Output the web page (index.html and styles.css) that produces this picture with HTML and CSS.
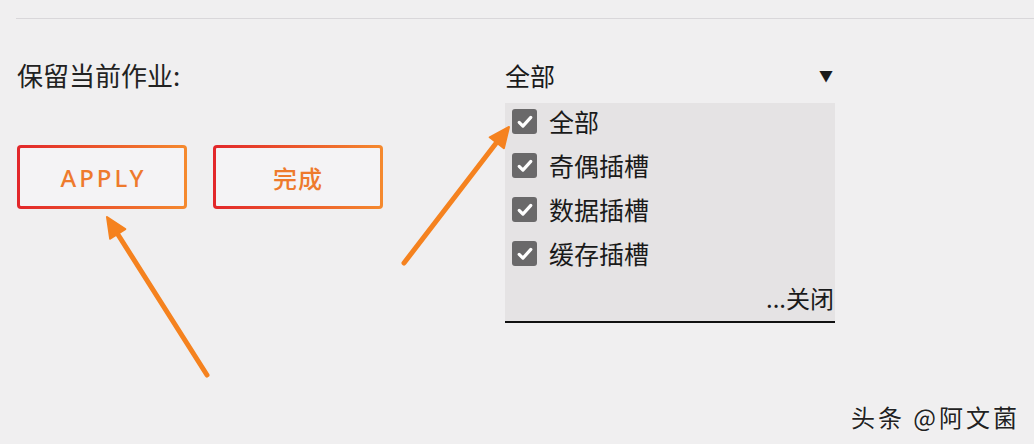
FILE: index.html
```html
<!DOCTYPE html>
<html lang="zh-CN">
<head>
    <meta charset="UTF-8">
    <title>保留当前作业</title>
    <link rel="stylesheet" href="styles.css">
</head>
<body>
    <div class="rule"></div>

    <div class="main">
        <div class="left">
            <div class="label">保留当前作业:</div>
            <div class="buttons">
                <button class="btn apply">APPLY</button>
                <button class="btn">完成</button>
            </div>
        </div>

        <div class="right">
            <div class="select">
                <span>全部</span>
                <span class="caret">&#9660;</span>
            </div>
            <div class="panel">
                <div class="items">
                    <div class="item"><span class="box"><svg viewBox="0 0 24 24"><path d="M5 12.5l4.5 4.5L19 6.5"/></svg></span>全部</div>
                    <div class="item"><span class="box"><svg viewBox="0 0 24 24"><path d="M5 12.5l4.5 4.5L19 6.5"/></svg></span>奇偶插槽</div>
                    <div class="item"><span class="box"><svg viewBox="0 0 24 24"><path d="M5 12.5l4.5 4.5L19 6.5"/></svg></span>数据插槽</div>
                    <div class="item"><span class="box"><svg viewBox="0 0 24 24"><path d="M5 12.5l4.5 4.5L19 6.5"/></svg></span>缓存插槽</div>
                </div>
                <div class="close">...关闭</div>
            </div>
        </div>
    </div>

    <!-- setas de anotação -->
    <svg class="arrows" width="1034" height="444" viewBox="0 0 1034 444">
        <line x1="207" y1="375" x2="117" y2="233"/>
        <polygon points="107,217 125.3,229.1 110.1,238.7"/>
        <line x1="404" y1="263" x2="497" y2="142"/>
        <polygon points="509,127 503.9,148.3 489.7,137.3"/>
    </svg>

    <div class="mark">头条 @阿文菌</div>
</body>
</html>
```

FILE: styles.css
```css
body {
    margin: 0;
    width: 1034px;
    height: 444px;
    overflow: hidden;
    position: relative;
    background-color: #f0eff0;
    font-family: "Noto Sans CJK SC", "Noto Sans", sans-serif;
    color: #1a1a1a;
}

.rule {
    height: 18px;
    margin-left: 16px;
    border-bottom: 1px solid #d9d7da;
}

.main {
    display: flex;
    padding-top: 39px;
    padding-left: 17px;
}

.left {
    width: 488px;
}

.label {
    font-size: 26px;
    line-height: 34px;
    color: #222;
}

.buttons {
    display: flex;
    gap: 26px;
    margin-top: 53px;
}

.btn {
    width: 170px;
    height: 64px;
    border: 3px solid transparent;
    border-radius: 4px;
    background: linear-gradient(#f4f3f5, #f4f3f5) padding-box,
                linear-gradient(90deg, #e2262a, #f58a2e) border-box;
    color: #ee7a2c;
    font-family: "Noto Sans CJK SC", "Noto Sans", sans-serif;
    font-size: 24px;
    font-weight: 500;
    letter-spacing: 1px;
    padding: 0;
}

.btn.apply {
    font-family: "Noto Sans", sans-serif;
    letter-spacing: 3px;
    padding-left: 3px;
}

.right {
    width: 330px;
}

.select {
    display: flex;
    justify-content: space-between;
    align-items: center;
    font-size: 25px;
    line-height: 34px;
    margin-bottom: 11px;
}

.caret {
    font-size: 14px;
    margin-right: 2px;
}

.panel {
    background-color: #e5e3e4;
    border-bottom: 2px solid #111;
    padding: 6px 0 8px 7px;
}

.items {
    display: flex;
    flex-direction: column;
    gap: 19px;
}

.item {
    display: flex;
    align-items: center;
    gap: 12px;
    font-size: 25px;
    line-height: 25px;
}

.box {
    width: 25px;
    height: 25px;
    border-radius: 3px;
    background-color: #6a696a;
    display: flex;
    justify-content: center;
    align-items: center;
}

.box svg {
    width: 20px;
    height: 20px;
    fill: none;
    stroke: #fff;
    stroke-width: 3.8;
    stroke-linecap: round;
    stroke-linejoin: round;
}

.close {
    margin-top: 17px;
    text-align: right;
    font-size: 24px;
    line-height: 30px;
    padding-right: 1px;
}

.arrows {
    position: absolute;
    top: 0;
    left: 0;
    pointer-events: none;
}

.arrows line {
    stroke: #f5821f;
    stroke-width: 5;
    stroke-linecap: round;
}

.arrows polygon {
    fill: #f5821f;
    stroke: #f5821f;
    stroke-width: 2;
    stroke-linejoin: round;
}

.mark {
    position: absolute;
    right: 14px;
    bottom: 10px;
    font-size: 24px;
    letter-spacing: 3px;
    color: #222;
    text-shadow: 0 0 2px #fff;
}
```
